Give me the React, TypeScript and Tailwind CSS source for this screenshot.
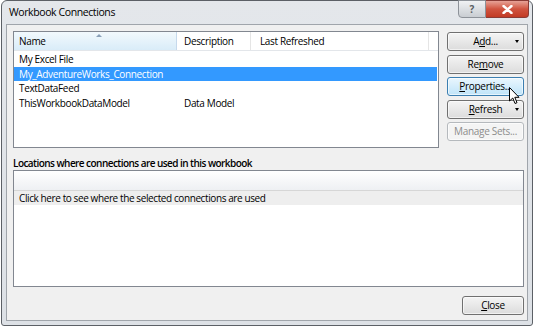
const FONT = { fontFamily: '"Open Sans", "Noto Sans", "Liberation Sans", sans-serif' };

function Btn({
  children,
  arrow,
  hover,
  disabled,
}: {
  children: React.ReactNode;
  arrow?: boolean;
  hover?: boolean;
  disabled?: boolean;
}) {
  const skin = disabled
    ? "border-[#b5b9bd] bg-[#f4f4f4] text-[#8c8c8c]"
    : hover
      ? "border-[#3c7fb1] bg-gradient-to-b from-[#eaf6fd] to-[#bfe4f9] text-black"
      : "border-[#707070] bg-gradient-to-b from-[#f4f4f4] to-[#dcdcdc] text-black";
  return (
    <div
      className={`relative flex h-[19px] w-full items-center justify-center rounded-[3px] border text-[10px] leading-none tracking-[-0.3px] shadow-[inset_0_0_0_1px_rgba(255,255,255,0.6)] ${skin}`}
    >
      <span className="-mt-[1px]">{children}</span>
      {arrow && (
        <span className="absolute right-[4px] top-[7px] h-0 w-0 border-x-[2.5px] border-t-[3px] border-x-transparent border-t-black" />
      )}
    </div>
  );
}

const rows = [
  { name: "My Excel File", desc: "" },
  { name: "My_AdventureWorks_Connection", desc: "", selected: true },
  { name: "TextDataFeed", desc: "" },
  { name: "ThisWorkbookDataModel", desc: "Data Model" },
];

export default function App() {
  return (
    <div className="relative h-[327px] w-[535px] overflow-hidden bg-white text-black" style={FONT}>
      <div className="ml-[1px] flex h-[326px] w-[532px] flex-col rounded-t-[6px] rounded-b-[3px] border border-[#5c6066] bg-gradient-to-b from-[#e4e7eb] to-[#dde1e6] px-[4px] pb-[4px]">
        {/* title bar */}
        <div className="flex h-[23px] items-start justify-between">
          <div className="pl-[3px] pt-[4px] text-[10.5px] leading-[14px] tracking-[-0.4px] text-black">
            Workbook Connections
          </div>
          <div className="-mt-[1px] mr-[-1px] flex">
            <div className="flex h-[18px] w-[28px] items-center justify-center rounded-bl-[4px] border border-[#8d9299] bg-gradient-to-b from-[#f0f2f4] to-[#c9cdd2] text-[10px] font-bold leading-none text-[#5a5e63]">
              ?
            </div>
            <div className="flex h-[18px] w-[43px] items-center justify-center rounded-br-[4px] border border-l-0 border-[#8a3b35] bg-gradient-to-b from-[#e6a196] via-[#d0533f] to-[#c23a24]">
              <svg width="11" height="9" viewBox="0 0 11 9">
                <path d="M1.5 1 L9.5 8 M9.5 1 L1.5 8" stroke="#fff" strokeWidth="2.4" strokeLinecap="round" />
              </svg>
            </div>
          </div>
        </div>

        {/* client area */}
        <div className="flex flex-1 flex-col border border-[#a0a5ab] bg-[#f0f0f0] pl-[6px] pr-[3px] pt-[6px]">
          <div className="flex gap-[8px]">
            {/* connections list */}
            <div className="h-[117px] w-[426px] border border-[#828790] bg-white">
              <div className="flex h-[19px] border-b border-[#e3e6ea] text-[10px] leading-none tracking-[-0.35px]">
                <div className="relative flex w-[163px] items-center border-r border-[#c6d9ec] bg-gradient-to-b from-[#f2f9fd] to-[#d9ecf8] pl-[5px]">
                  Name
                  <span className="absolute left-[82px] top-[2px] h-0 w-0 border-x-[3px] border-b-[3px] border-x-transparent border-b-[#8aa0b8]" />
                </div>
                <div className="flex w-[74px] items-center border-r border-[#e5e5e5] pl-[7px]">Description</div>
                <div className="flex w-[178px] items-center border-r border-[#e5e5e5] pl-[9px]">Last Refreshed</div>
              </div>
              <div className="pt-[1px]">
                {rows.map((r) => (
                  <div
                    key={r.name}
                    className={`flex h-[14.5px] w-[423px] items-center text-[10px] leading-none tracking-[-0.35px] ${
                      r.selected ? "bg-[#3399ff] text-white" : ""
                    }`}
                  >
                    <span className="w-[170px] pl-[5px]">{r.name}</span>
                    <span>{r.desc}</span>
                  </div>
                ))}
              </div>
            </div>

            {/* buttons */}
            <div className="flex w-[77px] flex-col gap-[3.5px] pt-[1px]">
              <Btn arrow>
                A<u>d</u>d...
              </Btn>
              <Btn>
                Re<u>m</u>ove
              </Btn>
              <Btn hover>
                <u>P</u>roperties...
              </Btn>
              <Btn arrow>
                <u>R</u>efresh
              </Btn>
              <Btn disabled>Manage Sets...</Btn>
            </div>
          </div>

          <div className="mt-[8px] text-[10px] font-semibold leading-[14px] tracking-[-0.55px]">
            Locations where connections are used in this workbook
          </div>

          {/* locations list */}
          <div className="h-[117px] border border-[#828790] bg-white">
            <div className="h-[19px] bg-gradient-to-b from-[#ffffff] to-[#eef0f3]" />
            <div className="flex h-[15px] items-center border-t border-[#d6d6d6] bg-[#eeeeee] pl-[5px] text-[10px] leading-none tracking-[-0.4px]">
              Click here to see where the selected connections are used
            </div>
          </div>

          <div className="mt-[9px] flex justify-end">
            <div className="w-[62px]">
              <Btn>
                <u>C</u>lose
              </Btn>
            </div>
          </div>
        </div>
      </div>

      {/* mouse pointer */}
      <svg className="absolute left-[509px] top-[87px]" width="12" height="18" viewBox="0 0 12 18">
        <path d="M0.5 0.5 L0.5 14 L3.8 11 L6 16.5 L8 15.7 L5.8 10.3 L10 10.3 Z" fill="#fff" stroke="#000" strokeWidth="1" strokeLinejoin="round" />
      </svg>
    </div>
  );
}
